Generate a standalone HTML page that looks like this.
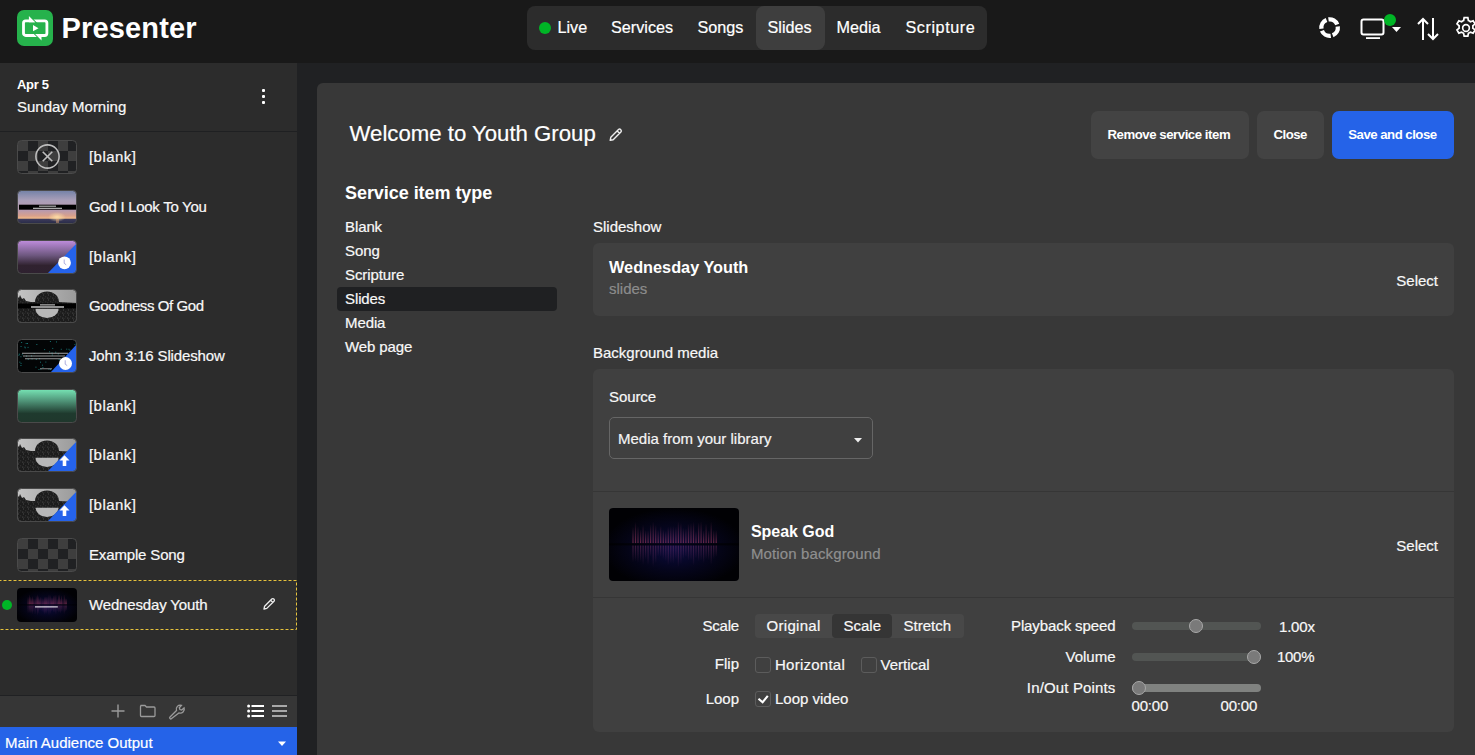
<!DOCTYPE html><html><head><meta charset="utf-8"><style>
*{margin:0;padding:0;box-sizing:border-box}
html,body{width:1475px;height:755px;overflow:hidden;background:#202123}
body{position:relative;font-family:"Liberation Sans",sans-serif}
.t{position:absolute;white-space:pre;line-height:1;-webkit-text-stroke:0.2px currentColor}
.t[style*='font-weight:700']{-webkit-text-stroke:0}
.b{position:absolute}
.thumb{position:absolute;width:60px;height:34px;border-radius:4px;overflow:hidden;border:1px solid #3a3a3a}
.big{width:130px;height:73px;border:none;border-radius:5px}
.cb{width:16px;height:16px;border:1px solid #5c5c5c;border-radius:3px}
.knob{width:14px;height:14px;border-radius:50%;background:#7a7a7a;border:1px solid #a8a8a8}
</style></head><body>
<div class="b" style="left:0px;top:0px;width:1475px;height:63px;background:#191919;border-radius:0px;"></div>
<div class="b" style="left:0px;top:63px;width:297px;height:692px;background:#2c2c2c;border-radius:0px;"></div>
<div class="b" style="left:297px;top:63px;width:1178px;height:692px;background:#202123;border-radius:0px;"></div>
<div class="b" style="left:317px;top:83px;width:1200px;height:700px;background:#383838;border-radius:6px;"></div>
<svg class="b" style="left:17px;top:10px" width="36" height="36" viewBox="0 0 36 36">
<rect x="0" y="0" width="36" height="36" rx="7" fill="#26b24c"/>
<rect x="6.5" y="10.8" width="23.4" height="14.7" rx="2.2" fill="none" stroke="#fff" stroke-width="2.8"/>
<path d="M14.6 8.2 L21.6 15.2 M21.8 28.1 L14.8 21.1" stroke="#26b24c" stroke-width="1.3"/>
<path d="M11.9 5.9 L11.9 12.2 L18.2 12.2 Z M24.5 30.4 L24.5 24.1 L18.2 24.1 Z" fill="#fff"/>
<path d="M16 15 L16 21.3 L21.5 18.15 Z" fill="#fff"/>
</svg>
<div class="t" style="left:61.5px;top:14.4px;font-size:29px;color:#ffffff;font-weight:700;letter-spacing:0.15px;">Presenter</div>
<div class="b" style="left:527px;top:6px;width:460px;height:44px;background:#2c2c2c;border-radius:8px;"></div>
<div class="b" style="left:756px;top:6px;width:69px;height:44px;background:#3e3e3e;border-radius:8px;"></div>
<div class="b" style="left:539px;top:22px;width:12px;height:12px;border-radius:50%;background:#00b526"></div>
<div class="t" style="left:557.5px;top:19.4px;font-size:16.2px;color:#ffffff;font-weight:400;letter-spacing:0px;">Live</div>
<div class="t" style="left:611.0px;top:19.4px;font-size:16.2px;color:#ffffff;font-weight:400;letter-spacing:0px;">Services</div>
<div class="t" style="left:697.5px;top:19.4px;font-size:16.2px;color:#ffffff;font-weight:400;letter-spacing:0px;">Songs</div>
<div class="t" style="left:767.5px;top:19.4px;font-size:16.2px;color:#ffffff;font-weight:400;letter-spacing:0px;">Slides</div>
<div class="t" style="left:836.5px;top:19.4px;font-size:16.2px;color:#ffffff;font-weight:400;letter-spacing:0px;">Media</div>
<div class="t" style="left:905.5px;top:19.4px;font-size:16.2px;color:#ffffff;font-weight:400;letter-spacing:0.55px;">Scripture</div>
<svg class="b" style="left:1317px;top:15px" width="25" height="25" viewBox="0 0 25 25">
<path d="M20.77 11.45 A8.25 8.25 0 0 1 15.69 20.25 M13.75 20.77 A8.25 8.25 0 0 1 4.95 15.69 M4.43 13.75 A8.25 8.25 0 0 1 9.51 4.95 M11.45 4.43 A8.25 8.25 0 0 1 20.25 9.51" fill="none" stroke="#fff" stroke-width="4.3"/>
</svg>
<svg class="b" style="left:1358px;top:10px" width="48" height="32" viewBox="0 0 48 32">
<rect x="3.5" y="9.5" width="22" height="15" rx="2" fill="none" stroke="#fff" stroke-width="2"/>
<rect x="8" y="27.2" width="14" height="1.8" fill="#fff"/>
<circle cx="32" cy="10" r="6" fill="#00b526"/>
<path d="M34 17 L43 17 L38.5 22 Z" fill="#fff"/>
</svg>
<svg class="b" style="left:1415px;top:16px" width="28" height="26" viewBox="0 0 28 26">
<path d="M8 3 V24 M3 8 L8 3 L13 8" fill="none" stroke="#fff" stroke-width="2" stroke-linejoin="miter"/>
<path d="M18 2 V23 M13 18 L18 23 L23 18" fill="none" stroke="#fff" stroke-width="2"/>
</svg>
<svg class="b" style="left:1452.7px;top:15.3px" width="26" height="26" viewBox="0 0 24 24">
<path fill="none" stroke="#fff" stroke-width="1.6" d="M10.3 2.5h3.4l.5 2.6a7.5 7.5 0 0 1 1.9 1.1l2.5-.9 1.7 2.9-2 1.7a7.5 7.5 0 0 1 0 2.2l2 1.7-1.7 2.9-2.5-.9a7.5 7.5 0 0 1-1.9 1.1l-.5 2.6h-3.4l-.5-2.6a7.5 7.5 0 0 1-1.9-1.1l-2.5.9-1.7-2.9 2-1.7a7.5 7.5 0 0 1 0-2.2l-2-1.7 1.7-2.9 2.5.9a7.5 7.5 0 0 1 1.9-1.1z"/>
<circle cx="12" cy="12" r="3.1" fill="none" stroke="#fff" stroke-width="1.5"/>
</svg>
<div class="t" style="left:17.0px;top:78.0px;font-size:13px;color:#ffffff;font-weight:700;letter-spacing:-0.3px;">Apr 5</div>
<div class="t" style="left:17.0px;top:99.3px;font-size:15px;color:#f8f8f8;font-weight:400;letter-spacing:0px;">Sunday Morning</div>
<div class="b" style="left:261.6px;top:88.6px;width:3px;height:3px;border-radius:1px;background:#fff;box-shadow:0 6px 0 #fff,0 12px 0 #fff"></div>
<div class="b" style="left:0px;top:131px;width:297px;height:1px;background:#1f2022;border-radius:0px;"></div>
<svg class="b" style="left:0px;top:579px" width="297" height="51" viewBox="0 0 297 51"><rect x="-1.5" y="1.5" width="298" height="49" fill="#303030" stroke="#e6c23c" stroke-width="1" stroke-dasharray="3 2"/></svg>
<svg class="b" style="left:17px;top:140px" width="60" height="34" viewBox="0 0 60 34"><defs><clipPath id="c0"><rect x="0.5" y="0.5" width="59" height="33" rx="4"/></clipPath></defs><g clip-path="url(#c0)"><rect width="60" height="34" fill="#202123"/><rect x="1" y="1" width="10" height="10" fill="#3e3e3e"/><rect x="21" y="1" width="10" height="10" fill="#3e3e3e"/><rect x="41" y="1" width="10" height="10" fill="#3e3e3e"/><rect x="11" y="11" width="10" height="10" fill="#3e3e3e"/><rect x="31" y="11" width="10" height="10" fill="#3e3e3e"/><rect x="51" y="11" width="10" height="10" fill="#3e3e3e"/><rect x="1" y="21" width="10" height="10" fill="#3e3e3e"/><rect x="21" y="21" width="10" height="10" fill="#3e3e3e"/><rect x="41" y="21" width="10" height="10" fill="#3e3e3e"/><rect x="11" y="31" width="10" height="10" fill="#3e3e3e"/><rect x="31" y="31" width="10" height="10" fill="#3e3e3e"/><rect x="51" y="31" width="10" height="10" fill="#3e3e3e"/><circle cx="30.5" cy="16.5" r="11.6" fill="none" stroke="#bdbdbd" stroke-width="1.6"/><path d="M25.7 11.7 L35.3 21.3 M35.3 11.7 L25.7 21.3" stroke="#bdbdbd" stroke-width="1.6"/></g><rect x="0.5" y="0.5" width="59" height="33" rx="4" fill="none" stroke="#4a4a4a" stroke-width="1"/></svg>
<div class="t" style="left:89.0px;top:149.3px;font-size:15px;color:#f8f8f8;font-weight:400;letter-spacing:0.45px;">[blank]</div>
<svg class="b" style="left:17px;top:190px" width="60" height="34" viewBox="0 0 60 34"><defs><clipPath id="c1"><rect x="0.5" y="0.5" width="59" height="33" rx="4"/></clipPath><linearGradient id="g1" x1="0" y1="0" x2="0" y2="1"><stop offset="0" stop-color="#7080a6"/><stop offset="0.3" stop-color="#a99fb8"/><stop offset="0.6" stop-color="#b89aae"/><stop offset="0.76" stop-color="#d8a08c"/><stop offset="0.83" stop-color="#f0b888"/><stop offset="0.86" stop-color="#3c3a5a"/><stop offset="1" stop-color="#262a46"/></linearGradient><radialGradient id="sun1" cx="0.5" cy="0.5" r="0.5"><stop offset="0" stop-color="#ffe0a8" stop-opacity="0.9"/><stop offset="1" stop-color="#ffe0a8" stop-opacity="0"/></radialGradient></defs><g clip-path="url(#c1)"><rect width="60" height="34" fill="url(#g1)"/><ellipse cx="40" cy="27" rx="9" ry="5" fill="url(#sun1)"/><rect x="39" y="29" width="3" height="5" fill="#e0a070" opacity="0.5"/><rect x="2" y="14.7" width="58" height="5" fill="#000"/><rect x="22" y="15.7" width="17" height="0.9" fill="#e8e8e8"/><rect x="16" y="17.8" width="29" height="0.9" fill="#f4f4f4"/></g><rect x="0.5" y="0.5" width="59" height="33" rx="4" fill="none" stroke="#4a4a4a" stroke-width="1"/></svg>
<div class="t" style="left:89.0px;top:199.3px;font-size:15px;color:#f8f8f8;font-weight:400;letter-spacing:-0.28px;">God I Look To You</div>
<svg class="b" style="left:17px;top:240px" width="60" height="34" viewBox="0 0 60 34"><defs><clipPath id="c2"><rect x="0.5" y="0.5" width="59" height="33" rx="4"/></clipPath><linearGradient id="g2" x1="0" y1="0" x2="0" y2="1"><stop offset="0" stop-color="#c28fe0"/><stop offset="0.45" stop-color="#6e5880"/><stop offset="0.75" stop-color="#30222f"/><stop offset="1" stop-color="#2e2130"/></linearGradient></defs><g clip-path="url(#c2)"><rect width="60" height="34" fill="url(#g2)"/><path d="M30 34 L60 3 L60 34 Z" fill="#2563eb"/><circle cx="47.5" cy="22.8" r="6.4" fill="#fff"/><path d="M47.2 19.5 V23.3 L49.2 24.8" stroke="#8a8ad0" stroke-width="0.7" fill="none"/></g><rect x="0.5" y="0.5" width="59" height="33" rx="4" fill="none" stroke="#4a4a4a" stroke-width="1"/></svg>
<div class="t" style="left:89.0px;top:249.3px;font-size:15px;color:#f8f8f8;font-weight:400;letter-spacing:0.45px;">[blank]</div>
<svg class="b" style="left:17px;top:289px" width="60" height="34" viewBox="0 0 60 34"><defs><clipPath id="c3"><rect x="0.5" y="0.5" width="59" height="33" rx="4"/></clipPath><linearGradient id="gg3" x1="0" y1="0" x2="1" y2="0"><stop offset="0" stop-color="#c4c4c4"/><stop offset="1" stop-color="#9a9a9a"/></linearGradient><pattern id="pn3" width="5" height="5" patternUnits="userSpaceOnUse"><rect width="5" height="5" fill="#1c1c1c"/><rect x="1" y="0.5" width="1" height="1" fill="#4a4a4a"/><rect x="3.2" y="2.3" width="1" height="1" fill="#3a3a3a"/><rect x="0.3" y="3.6" width="1" height="1" fill="#555"/><rect x="2.4" y="4" width="0.8" height="0.8" fill="#333"/></pattern></defs><g clip-path="url(#c3)"><rect width="60" height="34" fill="url(#gg3)"/><path d="M0 7 L2 9 L3 6 L5 10 L7 9 L9 12 L14 13 L18 13 A12 10.5 0 0 1 42 13 L60 14 L60 34 L0 34 Z" fill="url(#pn3)"/><path d="M18.5 19.5 A11.5 9.5 0 0 0 41.5 19.5 Z" fill="#b8b8b8"/><rect x="1" y="14.5" width="59" height="5" fill="#000"/><rect x="23" y="15.4" width="15" height="1" fill="#ddd"/><rect x="14" y="17.4" width="33" height="1.2" fill="#f0f0f0"/></g><rect x="0.5" y="0.5" width="59" height="33" rx="4" fill="none" stroke="#4a4a4a" stroke-width="1"/></svg>
<div class="t" style="left:89.0px;top:298.3px;font-size:15px;color:#f8f8f8;font-weight:400;letter-spacing:-0.42px;">Goodness Of God</div>
<svg class="b" style="left:17px;top:339px" width="60" height="34" viewBox="0 0 60 34"><defs><clipPath id="c4"><rect x="0.5" y="0.5" width="59" height="33" rx="4"/></clipPath></defs><g clip-path="url(#c4)"><rect width="60" height="34" fill="#030506"/><rect x="19.4" y="5.1" width="0.9" height="0.9" fill="#1a8a8a"/><rect x="39.1" y="2.5" width="0.9" height="0.9" fill="#1a8a8a"/><rect x="32.2" y="12.4" width="0.9" height="0.9" fill="#1a8a8a"/><rect x="3.5" y="17.3" width="0.9" height="0.9" fill="#1a8a8a"/><rect x="2.2" y="14.7" width="0.9" height="0.9" fill="#1a8a8a"/><rect x="4.2" y="3.1" width="0.9" height="0.9" fill="#1a8a8a"/><rect x="25.5" y="28.1" width="0.9" height="0.9" fill="#1a8a8a"/><rect x="7.4" y="7.6" width="0.9" height="0.9" fill="#1a8a8a"/><rect x="37.6" y="32.2" width="0.9" height="0.9" fill="#1a8a8a"/><rect x="34.6" y="13.5" width="0.9" height="0.9" fill="#1a8a8a"/><rect x="58.6" y="1.6" width="0.9" height="0.9" fill="#1a8a8a"/><rect x="51.5" y="9.8" width="0.9" height="0.9" fill="#1a8a8a"/><rect x="8.7" y="4.0" width="0.9" height="0.9" fill="#1a8a8a"/><rect x="18.5" y="27.7" width="0.9" height="0.9" fill="#1a8a8a"/><rect x="10.8" y="19.8" width="0.9" height="0.9" fill="#1a8a8a"/><rect x="38.3" y="12.7" width="0.9" height="0.9" fill="#1a8a8a"/><rect x="32.9" y="2.1" width="0.9" height="0.9" fill="#1a8a8a"/><rect x="3.6" y="7.0" width="0.9" height="0.9" fill="#1a8a8a"/><rect x="40.8" y="14.5" width="0.9" height="0.9" fill="#1a8a8a"/><rect x="18.8" y="19.9" width="0.9" height="0.9" fill="#1a8a8a"/><rect x="27.2" y="10.2" width="0.9" height="0.9" fill="#1a8a8a"/><rect x="47.7" y="23.8" width="0.9" height="0.9" fill="#1a8a8a"/><rect x="14.6" y="19.5" width="0.9" height="0.9" fill="#1a8a8a"/><rect x="31.5" y="29.8" width="0.9" height="0.9" fill="#1a8a8a"/><rect x="43.8" y="9.8" width="0.9" height="0.9" fill="#1a8a8a"/><rect x="58.8" y="4.0" width="0.9" height="0.9" fill="#1a8a8a"/><rect x="25.1" y="25.7" width="0.9" height="0.9" fill="#1a8a8a"/><rect x="9.1" y="16.6" width="0.9" height="0.9" fill="#1a8a8a"/><rect x="2.4" y="22.7" width="0.9" height="0.9" fill="#1a8a8a"/><rect x="45.9" y="19.5" width="0.9" height="0.9" fill="#1a8a8a"/><rect x="52.5" y="10.7" width="0.9" height="0.9" fill="#1a8a8a"/><rect x="41.7" y="20.2" width="0.9" height="0.9" fill="#1a8a8a"/><rect x="34.8" y="15.5" width="0.9" height="0.9" fill="#1a8a8a"/><rect x="50.4" y="32.1" width="0.9" height="0.9" fill="#1a8a8a"/><rect x="28.4" y="22.6" width="0.9" height="0.9" fill="#1a8a8a"/><rect x="3.6" y="23.9" width="0.9" height="0.9" fill="#1a8a8a"/><rect x="38.8" y="33.8" width="0.9" height="0.9" fill="#1a8a8a"/><rect x="49.3" y="9.7" width="0.9" height="0.9" fill="#1a8a8a"/><rect x="23.1" y="22.7" width="0.9" height="0.9" fill="#1a8a8a"/><rect x="1.4" y="15.7" width="0.9" height="0.9" fill="#1a8a8a"/><rect x="10.1" y="4.0" width="0.9" height="0.9" fill="#1a8a8a"/><rect x="3.5" y="26.1" width="0.9" height="0.9" fill="#1a8a8a"/><rect x="7.8" y="8.4" width="0.9" height="0.9" fill="#1a8a8a"/><rect x="23.5" y="29.6" width="0.9" height="0.9" fill="#1a8a8a"/><rect x="4.8" y="15.3" width="0.9" height="0.9" fill="#1a8a8a"/><rect x="33.0" y="30.0" width="0.9" height="0.9" fill="#1a8a8a"/><rect x="49.2" y="29.4" width="0.9" height="0.9" fill="#1a8a8a"/><rect x="16.7" y="14.1" width="0.9" height="0.9" fill="#1a8a8a"/><rect x="21.5" y="30.1" width="0.9" height="0.9" fill="#1a8a8a"/><rect x="57.5" y="5.1" width="0.9" height="0.9" fill="#1a8a8a"/><rect x="10.6" y="7.9" width="0.9" height="0.9" fill="#1a8a8a"/><rect x="14.0" y="16.5" width="0.9" height="0.9" fill="#1a8a8a"/><rect x="35.3" y="8.9" width="0.9" height="0.9" fill="#1a8a8a"/><rect x="0.2" y="14.2" width="0.9" height="0.9" fill="#1a8a8a"/><rect x="22.2" y="19.3" width="0.9" height="0.9" fill="#1a8a8a"/><rect x="5" y="13.8" width="46" height="0.8" fill="#ccc"/><rect x="6" y="16.6" width="42" height="0.8" fill="#bbb"/><rect x="8" y="19.4" width="36" height="0.8" fill="#bbb"/><rect x="23" y="29.4" width="12" height="0.8" fill="#aaa"/><path d="M33 34 L60 5 L60 34 Z" fill="#2563eb"/><circle cx="48.5" cy="24.5" r="6.5" fill="#fff"/><path d="M48.2 21.3 V25.2 L50.2 26.6" stroke="#8a8ad0" stroke-width="0.7" fill="none"/></g><rect x="0.5" y="0.5" width="59" height="33" rx="4" fill="none" stroke="#4a4a4a" stroke-width="1"/></svg>
<div class="t" style="left:89.0px;top:348.3px;font-size:15px;color:#f8f8f8;font-weight:400;letter-spacing:-0.15px;">John 3:16 Slideshow</div>
<svg class="b" style="left:17px;top:389px" width="60" height="34" viewBox="0 0 60 34"><defs><clipPath id="c5"><rect x="0.5" y="0.5" width="59" height="33" rx="4"/></clipPath><linearGradient id="g5" x1="0" y1="0" x2="0" y2="1"><stop offset="0" stop-color="#78e6b6"/><stop offset="0.35" stop-color="#4f9478"/><stop offset="0.72" stop-color="#1f3a2e"/><stop offset="1" stop-color="#1f372c"/></linearGradient></defs><g clip-path="url(#c5)"><rect width="60" height="34" fill="url(#g5)"/></g><rect x="0.5" y="0.5" width="59" height="33" rx="4" fill="none" stroke="#4a4a4a" stroke-width="1"/></svg>
<div class="t" style="left:89.0px;top:398.3px;font-size:15px;color:#f8f8f8;font-weight:400;letter-spacing:0.45px;">[blank]</div>
<svg class="b" style="left:17px;top:438px" width="60" height="34" viewBox="0 0 60 34"><defs><clipPath id="c6"><rect x="0.5" y="0.5" width="59" height="33" rx="4"/></clipPath><linearGradient id="gg6" x1="0" y1="0" x2="1" y2="0"><stop offset="0" stop-color="#c4c4c4"/><stop offset="1" stop-color="#9a9a9a"/></linearGradient><pattern id="pn6" width="5" height="5" patternUnits="userSpaceOnUse"><rect width="5" height="5" fill="#1c1c1c"/><rect x="1" y="0.5" width="1" height="1" fill="#4a4a4a"/><rect x="3.2" y="2.3" width="1" height="1" fill="#3a3a3a"/><rect x="0.3" y="3.6" width="1" height="1" fill="#555"/><rect x="2.4" y="4" width="0.8" height="0.8" fill="#333"/></pattern></defs><g clip-path="url(#c6)"><rect width="60" height="34" fill="url(#gg6)"/><path d="M0 7 L2 9 L3 6 L5 10 L7 9 L9 12 L14 13 L18 13 A12 10.5 0 0 1 42 13 L60 14 L60 34 L0 34 Z" fill="url(#pn6)"/><path d="M18.5 19.5 A11.5 9.5 0 0 0 41.5 19.5 Z" fill="#b8b8b8"/><rect x="18" y="13" width="24" height="6.5" fill="url(#pn6)"/><path d="M30 34 L60 3 L60 34 Z" fill="#2563eb"/><path d="M47.5 17.2 L52.5 22.5 L49.3 22.5 L49.3 28 L45.7 28 L45.7 22.5 L42.5 22.5 Z" fill="#fff"/></g><rect x="0.5" y="0.5" width="59" height="33" rx="4" fill="none" stroke="#4a4a4a" stroke-width="1"/></svg>
<div class="t" style="left:89.0px;top:447.3px;font-size:15px;color:#f8f8f8;font-weight:400;letter-spacing:0.45px;">[blank]</div>
<svg class="b" style="left:17px;top:488px" width="60" height="34" viewBox="0 0 60 34"><defs><clipPath id="c7"><rect x="0.5" y="0.5" width="59" height="33" rx="4"/></clipPath><linearGradient id="gg7" x1="0" y1="0" x2="1" y2="0"><stop offset="0" stop-color="#c4c4c4"/><stop offset="1" stop-color="#9a9a9a"/></linearGradient><pattern id="pn7" width="5" height="5" patternUnits="userSpaceOnUse"><rect width="5" height="5" fill="#1c1c1c"/><rect x="1" y="0.5" width="1" height="1" fill="#4a4a4a"/><rect x="3.2" y="2.3" width="1" height="1" fill="#3a3a3a"/><rect x="0.3" y="3.6" width="1" height="1" fill="#555"/><rect x="2.4" y="4" width="0.8" height="0.8" fill="#333"/></pattern></defs><g clip-path="url(#c7)"><rect width="60" height="34" fill="url(#gg7)"/><path d="M0 7 L2 9 L3 6 L5 10 L7 9 L9 12 L14 13 L18 13 A12 10.5 0 0 1 42 13 L60 14 L60 34 L0 34 Z" fill="url(#pn7)"/><path d="M18.5 19.5 A11.5 9.5 0 0 0 41.5 19.5 Z" fill="#b8b8b8"/><rect x="18" y="13" width="24" height="6.5" fill="url(#pn7)"/><path d="M30 34 L60 3 L60 34 Z" fill="#2563eb"/><path d="M47.5 17.2 L52.5 22.5 L49.3 22.5 L49.3 28 L45.7 28 L45.7 22.5 L42.5 22.5 Z" fill="#fff"/></g><rect x="0.5" y="0.5" width="59" height="33" rx="4" fill="none" stroke="#4a4a4a" stroke-width="1"/></svg>
<div class="t" style="left:89.0px;top:497.3px;font-size:15px;color:#f8f8f8;font-weight:400;letter-spacing:0.45px;">[blank]</div>
<svg class="b" style="left:17px;top:538px" width="60" height="34" viewBox="0 0 60 34"><defs><clipPath id="c8"><rect x="0.5" y="0.5" width="59" height="33" rx="4"/></clipPath></defs><g clip-path="url(#c8)"><rect width="60" height="34" fill="#202123"/><rect x="1" y="1" width="10" height="10" fill="#3e3e3e"/><rect x="21" y="1" width="10" height="10" fill="#3e3e3e"/><rect x="41" y="1" width="10" height="10" fill="#3e3e3e"/><rect x="11" y="11" width="10" height="10" fill="#3e3e3e"/><rect x="31" y="11" width="10" height="10" fill="#3e3e3e"/><rect x="51" y="11" width="10" height="10" fill="#3e3e3e"/><rect x="1" y="21" width="10" height="10" fill="#3e3e3e"/><rect x="21" y="21" width="10" height="10" fill="#3e3e3e"/><rect x="41" y="21" width="10" height="10" fill="#3e3e3e"/><rect x="11" y="31" width="10" height="10" fill="#3e3e3e"/><rect x="31" y="31" width="10" height="10" fill="#3e3e3e"/><rect x="51" y="31" width="10" height="10" fill="#3e3e3e"/></g><rect x="0.5" y="0.5" width="59" height="33" rx="4" fill="none" stroke="#4a4a4a" stroke-width="1"/></svg>
<div class="t" style="left:89.0px;top:547.3px;font-size:15px;color:#f8f8f8;font-weight:400;letter-spacing:-0.15px;">Example Song</div>
<svg class="b" style="left:17px;top:588px" width="60" height="34" viewBox="0 0 60 34"><defs><clipPath id="cpt9"><rect width="60" height="34" rx="4"/></clipPath><radialGradient id="rgt9" cx="0.5" cy="0.55" r="0.55"><stop offset="0" stop-color="#0c0c40"/><stop offset="0.55" stop-color="#05051c"/><stop offset="1" stop-color="#010104"/></radialGradient><linearGradient id="upt9" x1="0" y1="1" x2="0" y2="0"><stop offset="0" stop-color="#c84870" stop-opacity="0.85"/><stop offset="1" stop-color="#d0507a" stop-opacity="0"/></linearGradient><linearGradient id="dnt9" x1="0" y1="0" x2="0" y2="1"><stop offset="0" stop-color="#a04078" stop-opacity="0.6375"/><stop offset="1" stop-color="#b04880" stop-opacity="0"/></linearGradient></defs><g clip-path="url(#cpt9)"><rect width="60" height="34" fill="url(#rgt9)"/><rect x="10.8" y="8.7" width="0.5" height="7.7" fill="url(#upt9)"/><rect x="10.8" y="17.4" width="0.5" height="8.0" fill="url(#dnt9)"/><rect x="12.0" y="6.5" width="0.5" height="9.9" fill="url(#upt9)"/><rect x="12.0" y="17.4" width="0.5" height="7.5" fill="url(#dnt9)"/><rect x="13.1" y="8.4" width="0.5" height="7.9" fill="url(#upt9)"/><rect x="13.1" y="17.4" width="0.5" height="8.1" fill="url(#dnt9)"/><rect x="14.3" y="9.9" width="0.5" height="6.5" fill="url(#upt9)"/><rect x="14.3" y="17.4" width="0.5" height="7.7" fill="url(#dnt9)"/><rect x="15.5" y="7.9" width="0.5" height="8.5" fill="url(#upt9)"/><rect x="15.5" y="17.4" width="0.5" height="9.1" fill="url(#dnt9)"/><rect x="16.6" y="10.3" width="0.5" height="6.0" fill="url(#upt9)"/><rect x="16.6" y="17.4" width="0.5" height="6.6" fill="url(#dnt9)"/><rect x="17.8" y="10.4" width="0.5" height="6.0" fill="url(#upt9)"/><rect x="17.8" y="17.4" width="0.5" height="9.2" fill="url(#dnt9)"/><rect x="18.9" y="7.6" width="0.5" height="8.8" fill="url(#upt9)"/><rect x="18.9" y="17.4" width="0.5" height="5.3" fill="url(#dnt9)"/><rect x="20.1" y="6.3" width="0.5" height="10.1" fill="url(#upt9)"/><rect x="20.1" y="17.4" width="0.5" height="10.0" fill="url(#dnt9)"/><rect x="21.3" y="7.8" width="0.5" height="8.6" fill="url(#upt9)"/><rect x="21.3" y="17.4" width="0.5" height="8.2" fill="url(#dnt9)"/><rect x="22.4" y="10.1" width="0.5" height="6.3" fill="url(#upt9)"/><rect x="22.4" y="17.4" width="0.5" height="5.2" fill="url(#dnt9)"/><rect x="23.6" y="8.4" width="0.5" height="8.0" fill="url(#upt9)"/><rect x="23.6" y="17.4" width="0.5" height="5.4" fill="url(#dnt9)"/><rect x="24.8" y="9.9" width="0.5" height="6.5" fill="url(#upt9)"/><rect x="24.8" y="17.4" width="0.5" height="6.3" fill="url(#dnt9)"/><rect x="25.9" y="10.6" width="0.5" height="5.7" fill="url(#upt9)"/><rect x="25.9" y="17.4" width="0.5" height="7.5" fill="url(#dnt9)"/><rect x="27.1" y="8.8" width="0.5" height="7.6" fill="url(#upt9)"/><rect x="27.1" y="17.4" width="0.5" height="9.4" fill="url(#dnt9)"/><rect x="28.3" y="8.4" width="0.5" height="8.0" fill="url(#upt9)"/><rect x="28.3" y="17.4" width="0.5" height="8.4" fill="url(#dnt9)"/><rect x="29.4" y="8.5" width="0.5" height="7.9" fill="url(#upt9)"/><rect x="29.4" y="17.4" width="0.5" height="8.5" fill="url(#dnt9)"/><rect x="30.6" y="8.7" width="0.5" height="7.7" fill="url(#upt9)"/><rect x="30.6" y="17.4" width="0.5" height="6.5" fill="url(#dnt9)"/><rect x="31.7" y="6.2" width="0.5" height="10.2" fill="url(#upt9)"/><rect x="31.7" y="17.4" width="0.5" height="10.2" fill="url(#dnt9)"/><rect x="32.9" y="6.9" width="0.5" height="9.5" fill="url(#upt9)"/><rect x="32.9" y="17.4" width="0.5" height="8.7" fill="url(#dnt9)"/><rect x="34.1" y="9.3" width="0.5" height="7.1" fill="url(#upt9)"/><rect x="34.1" y="17.4" width="0.5" height="6.3" fill="url(#dnt9)"/><rect x="35.2" y="9.5" width="0.5" height="6.9" fill="url(#upt9)"/><rect x="35.2" y="17.4" width="0.5" height="5.5" fill="url(#dnt9)"/><rect x="36.4" y="7.3" width="0.5" height="9.1" fill="url(#upt9)"/><rect x="36.4" y="17.4" width="0.5" height="7.1" fill="url(#dnt9)"/><rect x="37.6" y="6.9" width="0.5" height="9.5" fill="url(#upt9)"/><rect x="37.6" y="17.4" width="0.5" height="7.1" fill="url(#dnt9)"/><rect x="38.7" y="6.4" width="0.5" height="10.0" fill="url(#upt9)"/><rect x="38.7" y="17.4" width="0.5" height="9.4" fill="url(#dnt9)"/><rect x="39.9" y="10.8" width="0.5" height="5.6" fill="url(#upt9)"/><rect x="39.9" y="17.4" width="0.5" height="6.2" fill="url(#dnt9)"/><rect x="41.1" y="6.6" width="0.5" height="9.8" fill="url(#upt9)"/><rect x="41.1" y="17.4" width="0.5" height="7.5" fill="url(#dnt9)"/><rect x="42.2" y="6.3" width="0.5" height="10.1" fill="url(#upt9)"/><rect x="42.2" y="17.4" width="0.5" height="7.1" fill="url(#dnt9)"/><rect x="43.4" y="10.4" width="0.5" height="5.9" fill="url(#upt9)"/><rect x="43.4" y="17.4" width="0.5" height="8.3" fill="url(#dnt9)"/><rect x="44.5" y="7.2" width="0.5" height="9.2" fill="url(#upt9)"/><rect x="44.5" y="17.4" width="0.5" height="6.5" fill="url(#dnt9)"/><rect x="45.7" y="10.4" width="0.5" height="6.0" fill="url(#upt9)"/><rect x="45.7" y="17.4" width="0.5" height="6.8" fill="url(#dnt9)"/><rect x="46.9" y="6.4" width="0.5" height="10.0" fill="url(#upt9)"/><rect x="46.9" y="17.4" width="0.5" height="9.0" fill="url(#dnt9)"/><rect x="48.0" y="10.2" width="0.5" height="6.2" fill="url(#upt9)"/><rect x="48.0" y="17.4" width="0.5" height="6.4" fill="url(#dnt9)"/><rect x="49.2" y="10.3" width="0.5" height="6.1" fill="url(#upt9)"/><rect x="49.2" y="17.4" width="0.5" height="5.4" fill="url(#dnt9)"/><rect x="0" y="16.4" width="60" height="1.0" fill="#000" opacity="0.6"/><rect x="18.0" y="18.4" width="22.8" height="1" fill="#fff"/></g></svg>
<div class="t" style="left:89.0px;top:597.3px;font-size:15px;color:#f8f8f8;font-weight:400;letter-spacing:-0.15px;">Wednesday Youth</div>
<div class="b" style="left:2px;top:600px;width:10px;height:10px;border-radius:50%;background:#00b526"></div>
<svg class="b" style="left:261px;top:596px" width="16" height="16" viewBox="0 0 16 16">
<path d="M3 13 L3.6 10.2 L10.8 3 a1.4 1.4 0 0 1 2 0 l0.2 0.2 a1.4 1.4 0 0 1 0 2 L5.8 12.4 Z M9.6 4.2 L11.8 6.4" fill="none" stroke="#eee" stroke-width="1.3" stroke-linejoin="round"/>
</svg>
<div class="b" style="left:0px;top:695px;width:297px;height:32px;background:#363636;border-radius:0px;"></div>
<div class="b" style="left:0px;top:695px;width:297px;height:1px;background:#202123;border-radius:0px;"></div>
<svg class="b" style="left:108px;top:700px" width="190" height="22" viewBox="0 0 190 22">
<path d="M10 4.5 V17.5 M3.5 11 H16.5" stroke="#9a9a9a" stroke-width="1.4" fill="none"/>
<path d="M32.5 5.5 h4.5 l1.5 1.5 h7.5 a1 1 0 0 1 1 1 v7.5 a1 1 0 0 1 -1 1 h-12.5 a1 1 0 0 1 -1 -1 v-9 a1 1 0 0 1 1 -1z" stroke="#9a9a9a" stroke-width="1.3" fill="none"/>
<path d="M62 17 L68.5 10.5 a4 4 0 0 1 5 -5.2 l-2.2 2.4 l0.6 1.8 l1.8 0.6 l2.4 -2.2 a4 4 0 0 1 -5.2 5 L63.6 18.6 a1.1 1.1 0 0 1 -1.6 -1.6z" stroke="#9a9a9a" stroke-width="1.3" fill="none"/>
<circle cx="140.6" cy="6" r="1.5" fill="#fff"/><circle cx="140.6" cy="11" r="1.5" fill="#fff"/><circle cx="140.6" cy="16" r="1.5" fill="#fff"/>
<rect x="143.5" y="5" width="12.5" height="2" fill="#fff"/><rect x="143.5" y="10" width="12.5" height="2" fill="#fff"/><rect x="143.5" y="15" width="12.5" height="2" fill="#fff"/>
<rect x="164" y="5" width="15" height="2" fill="#a8a8a8"/><rect x="164" y="10" width="15" height="2" fill="#a8a8a8"/><rect x="164" y="15" width="15" height="2" fill="#a8a8a8"/>
</svg>
<div class="b" style="left:0px;top:727px;width:297px;height:28px;background:#2563e8;border-radius:0px;"></div>
<div class="t" style="left:5.0px;top:735.3px;font-size:15px;color:#ffffff;font-weight:400;letter-spacing:0px;">Main Audience Output</div>
<svg class="b" style="left:277px;top:741px" width="10" height="6" viewBox="0 0 10 6"><path d="M1 0.5 H9 L5 5 Z" fill="#fff"/></svg>
<div class="t" style="left:349.5px;top:123.1px;font-size:22.2px;color:#ffffff;font-weight:400;letter-spacing:0px;">Welcome to Youth Group</div>
<svg class="b" style="left:607px;top:126px" width="18" height="17" viewBox="0 0 18 17">
<path d="M3.2 14.3 L3.8 11.3 L11.5 3.6 a1.5 1.5 0 0 1 2.1 0 l0.3 0.3 a1.5 1.5 0 0 1 0 2.1 L6.2 13.7 Z M10.2 4.9 L12.6 7.3" fill="none" stroke="#eee" stroke-width="1.4" stroke-linejoin="round"/>
</svg>
<div class="b" style="left:1091px;top:111px;width:158px;height:48px;background:#434343;border-radius:7px;"></div>
<div class="b" style="left:1257px;top:111px;width:67px;height:48px;background:#434343;border-radius:7px;"></div>
<div class="b" style="left:1332px;top:111px;width:122px;height:48px;background:#2563e8;border-radius:7px;"></div>
<div class="t" style="left:1107.5px;top:128.0px;font-size:13.2px;color:#ffffff;font-weight:700;letter-spacing:-0.45px;">Remove service item</div>
<div class="t" style="left:1273.5px;top:128.0px;font-size:13.2px;color:#ffffff;font-weight:700;letter-spacing:-0.5px;">Close</div>
<div class="t" style="left:1348.3px;top:128.0px;font-size:13.2px;color:#ffffff;font-weight:700;letter-spacing:-0.5px;">Save and close</div>
<div class="t" style="left:345.0px;top:183.8px;font-size:18px;color:#ffffff;font-weight:700;letter-spacing:-0.05px;">Service item type</div>
<div class="b" style="left:337px;top:287px;width:220px;height:24px;background:#1f2022;border-radius:4px;"></div>
<div class="t" style="left:345.0px;top:219.1px;font-size:15px;color:#f8f8f8;font-weight:400;letter-spacing:-0.1px;">Blank</div>
<div class="t" style="left:345.0px;top:243.1px;font-size:15px;color:#f8f8f8;font-weight:400;letter-spacing:-0.1px;">Song</div>
<div class="t" style="left:345.0px;top:267.1px;font-size:15px;color:#f8f8f8;font-weight:400;letter-spacing:-0.1px;">Scripture</div>
<div class="t" style="left:345.0px;top:291.1px;font-size:15px;color:#f8f8f8;font-weight:400;letter-spacing:-0.1px;">Slides</div>
<div class="t" style="left:345.0px;top:315.1px;font-size:15px;color:#f8f8f8;font-weight:400;letter-spacing:-0.1px;">Media</div>
<div class="t" style="left:345.0px;top:339.1px;font-size:15px;color:#f8f8f8;font-weight:400;letter-spacing:-0.1px;">Web page</div>
<div class="t" style="left:593.0px;top:219.1px;font-size:15px;color:#f8f8f8;font-weight:400;letter-spacing:0px;">Slideshow</div>
<div class="b" style="left:593px;top:243px;width:861px;height:73px;background:#404040;border-radius:6px;"></div>
<div class="t" style="left:609.0px;top:259.0px;font-size:16.3px;color:#ffffff;font-weight:700;letter-spacing:0px;">Wednesday Youth</div>
<div class="t" style="left:609.0px;top:280.8px;font-size:15px;color:#8c8c8c;font-weight:400;letter-spacing:0px;">slides</div>
<div class="t" style="right:37.0px;top:272.8px;font-size:15px;color:#f8f8f8;font-weight:400;letter-spacing:0px;">Select</div>
<div class="t" style="left:593.0px;top:345.3px;font-size:15px;color:#f8f8f8;font-weight:400;letter-spacing:0px;">Background media</div>
<div class="b" style="left:593px;top:369px;width:861px;height:363px;background:#404040;border-radius:6px;"></div>
<div class="t" style="left:609.0px;top:389.2px;font-size:15px;color:#f8f8f8;font-weight:400;letter-spacing:-0.1px;">Source</div>
<div class="b" style="left:609px;top:417px;width:264px;height:42px;border:1px solid #666;border-radius:5px;background:#404040"></div>
<div class="t" style="left:618.0px;top:430.5px;font-size:15px;color:#f4f4f4;font-weight:400;letter-spacing:0px;">Media from your library</div>
<svg class="b" style="left:852.5px;top:436.5px" width="10" height="6" viewBox="0 0 10 6"><path d="M1 1 H9 L5 5.5 Z" fill="#eee"/></svg>
<div class="b" style="left:593px;top:491px;width:861px;height:1px;background:#363636;border-radius:0px;"></div>
<svg class="b" style="left:609px;top:508px" width="130" height="73" viewBox="0 0 130 73"><defs><clipPath id="cpbig"><rect width="130" height="73" rx="4"/></clipPath><radialGradient id="rgbig" cx="0.5" cy="0.55" r="0.55"><stop offset="0" stop-color="#0c0c40"/><stop offset="0.55" stop-color="#05051c"/><stop offset="1" stop-color="#010104"/></radialGradient><linearGradient id="upbig" x1="0" y1="1" x2="0" y2="0"><stop offset="0" stop-color="#c84870" stop-opacity="0.5"/><stop offset="1" stop-color="#d0507a" stop-opacity="0"/></linearGradient><linearGradient id="dnbig" x1="0" y1="0" x2="0" y2="1"><stop offset="0" stop-color="#a04078" stop-opacity="0.375"/><stop offset="1" stop-color="#b04880" stop-opacity="0"/></linearGradient></defs><g clip-path="url(#cpbig)"><rect width="130" height="73" fill="url(#rgbig)"/><rect x="23.4" y="18.7" width="1.2" height="16.5" fill="url(#upbig)"/><rect x="23.4" y="37.4" width="1.2" height="17.1" fill="url(#dnbig)"/><rect x="25.9" y="14.0" width="1.2" height="21.2" fill="url(#upbig)"/><rect x="25.9" y="37.4" width="1.2" height="16.0" fill="url(#dnbig)"/><rect x="28.4" y="18.1" width="1.2" height="17.0" fill="url(#upbig)"/><rect x="28.4" y="37.4" width="1.2" height="17.4" fill="url(#dnbig)"/><rect x="31.0" y="21.3" width="1.2" height="13.9" fill="url(#upbig)"/><rect x="31.0" y="37.4" width="1.2" height="16.6" fill="url(#dnbig)"/><rect x="33.5" y="16.9" width="1.2" height="18.3" fill="url(#upbig)"/><rect x="33.5" y="37.4" width="1.2" height="19.6" fill="url(#dnbig)"/><rect x="36.0" y="22.2" width="1.2" height="13.0" fill="url(#upbig)"/><rect x="36.0" y="37.4" width="1.2" height="14.3" fill="url(#dnbig)"/><rect x="38.5" y="22.2" width="1.2" height="12.9" fill="url(#upbig)"/><rect x="38.5" y="37.4" width="1.2" height="19.8" fill="url(#dnbig)"/><rect x="41.0" y="16.3" width="1.2" height="18.9" fill="url(#upbig)"/><rect x="41.0" y="37.4" width="1.2" height="11.4" fill="url(#dnbig)"/><rect x="43.6" y="13.5" width="1.2" height="21.7" fill="url(#upbig)"/><rect x="43.6" y="37.4" width="1.2" height="21.5" fill="url(#dnbig)"/><rect x="46.1" y="16.7" width="1.2" height="18.5" fill="url(#upbig)"/><rect x="46.1" y="37.4" width="1.2" height="17.7" fill="url(#dnbig)"/><rect x="48.6" y="21.6" width="1.2" height="13.6" fill="url(#upbig)"/><rect x="48.6" y="37.4" width="1.2" height="11.1" fill="url(#dnbig)"/><rect x="51.1" y="17.9" width="1.2" height="17.3" fill="url(#upbig)"/><rect x="51.1" y="37.4" width="1.2" height="11.6" fill="url(#dnbig)"/><rect x="53.7" y="21.3" width="1.2" height="13.9" fill="url(#upbig)"/><rect x="53.7" y="37.4" width="1.2" height="13.6" fill="url(#dnbig)"/><rect x="56.2" y="22.8" width="1.2" height="12.3" fill="url(#upbig)"/><rect x="56.2" y="37.4" width="1.2" height="16.0" fill="url(#dnbig)"/><rect x="58.7" y="18.8" width="1.2" height="16.4" fill="url(#upbig)"/><rect x="58.7" y="37.4" width="1.2" height="20.2" fill="url(#dnbig)"/><rect x="61.2" y="18.0" width="1.2" height="17.2" fill="url(#upbig)"/><rect x="61.2" y="37.4" width="1.2" height="18.0" fill="url(#dnbig)"/><rect x="63.7" y="18.2" width="1.2" height="17.0" fill="url(#upbig)"/><rect x="63.7" y="37.4" width="1.2" height="18.2" fill="url(#dnbig)"/><rect x="66.3" y="18.6" width="1.2" height="16.6" fill="url(#upbig)"/><rect x="66.3" y="37.4" width="1.2" height="14.0" fill="url(#dnbig)"/><rect x="68.8" y="13.3" width="1.2" height="21.9" fill="url(#upbig)"/><rect x="68.8" y="37.4" width="1.2" height="21.9" fill="url(#dnbig)"/><rect x="71.3" y="14.9" width="1.2" height="20.3" fill="url(#upbig)"/><rect x="71.3" y="37.4" width="1.2" height="18.7" fill="url(#dnbig)"/><rect x="73.8" y="20.0" width="1.2" height="15.2" fill="url(#upbig)"/><rect x="73.8" y="37.4" width="1.2" height="13.5" fill="url(#dnbig)"/><rect x="76.3" y="20.3" width="1.2" height="14.9" fill="url(#upbig)"/><rect x="76.3" y="37.4" width="1.2" height="11.7" fill="url(#dnbig)"/><rect x="78.9" y="15.6" width="1.2" height="19.6" fill="url(#upbig)"/><rect x="78.9" y="37.4" width="1.2" height="15.3" fill="url(#dnbig)"/><rect x="81.4" y="14.8" width="1.2" height="20.4" fill="url(#upbig)"/><rect x="81.4" y="37.4" width="1.2" height="15.2" fill="url(#dnbig)"/><rect x="83.9" y="13.7" width="1.2" height="21.5" fill="url(#upbig)"/><rect x="83.9" y="37.4" width="1.2" height="20.2" fill="url(#dnbig)"/><rect x="86.4" y="23.1" width="1.2" height="12.1" fill="url(#upbig)"/><rect x="86.4" y="37.4" width="1.2" height="13.2" fill="url(#dnbig)"/><rect x="89.0" y="14.2" width="1.2" height="21.0" fill="url(#upbig)"/><rect x="89.0" y="37.4" width="1.2" height="16.1" fill="url(#dnbig)"/><rect x="91.5" y="13.5" width="1.2" height="21.7" fill="url(#upbig)"/><rect x="91.5" y="37.4" width="1.2" height="15.3" fill="url(#dnbig)"/><rect x="94.0" y="22.4" width="1.2" height="12.8" fill="url(#upbig)"/><rect x="94.0" y="37.4" width="1.2" height="17.8" fill="url(#dnbig)"/><rect x="96.5" y="15.5" width="1.2" height="19.7" fill="url(#upbig)"/><rect x="96.5" y="37.4" width="1.2" height="13.9" fill="url(#dnbig)"/><rect x="99.0" y="22.3" width="1.2" height="12.9" fill="url(#upbig)"/><rect x="99.0" y="37.4" width="1.2" height="14.6" fill="url(#dnbig)"/><rect x="101.6" y="13.6" width="1.2" height="21.5" fill="url(#upbig)"/><rect x="101.6" y="37.4" width="1.2" height="19.3" fill="url(#dnbig)"/><rect x="104.1" y="22.0" width="1.2" height="13.2" fill="url(#upbig)"/><rect x="104.1" y="37.4" width="1.2" height="13.6" fill="url(#dnbig)"/><rect x="106.6" y="22.1" width="1.2" height="13.0" fill="url(#upbig)"/><rect x="106.6" y="37.4" width="1.2" height="11.6" fill="url(#dnbig)"/><rect x="0" y="35.2" width="130" height="2.2" fill="#000" opacity="0.6"/></g></svg>
<div class="t" style="left:751.0px;top:524.0px;font-size:16px;color:#ffffff;font-weight:700;letter-spacing:-0.05px;">Speak God</div>
<div class="t" style="left:751.0px;top:545.9px;font-size:15px;color:#8f8f8f;font-weight:400;letter-spacing:0.12px;">Motion background</div>
<div class="t" style="right:37.0px;top:537.5px;font-size:15px;color:#f8f8f8;font-weight:400;letter-spacing:0px;">Select</div>
<div class="b" style="left:593px;top:597px;width:861px;height:1px;background:#363636;border-radius:0px;"></div>
<div class="t" style="right:736.0px;top:618.1px;font-size:15px;color:#f8f8f8;font-weight:400;letter-spacing:-0.2px;">Scale</div>
<div class="b" style="left:755px;top:614px;width:209px;height:24px;background:#484848;border-radius:4px;"></div>
<div class="b" style="left:832px;top:614px;width:60px;height:24px;background:#353535;border-radius:4px;"></div>
<div class="t" style="left:766.5px;top:618.1px;font-size:15px;color:#f8f8f8;font-weight:400;letter-spacing:0.3px;">Original</div>
<div class="t" style="left:843.5px;top:618.1px;font-size:15px;color:#f8f8f8;font-weight:400;letter-spacing:0px;">Scale</div>
<div class="t" style="left:903.5px;top:618.1px;font-size:15px;color:#f8f8f8;font-weight:400;letter-spacing:0px;">Stretch</div>
<div class="t" style="right:736.0px;top:655.8px;font-size:15px;color:#f8f8f8;font-weight:400;letter-spacing:0px;">Flip</div>
<div class="b cb" style="left:755px;top:657px"></div>
<div class="t" style="left:775.0px;top:657.2px;font-size:15px;color:#f8f8f8;font-weight:400;letter-spacing:0.25px;">Horizontal</div>
<div class="b cb" style="left:861px;top:657px"></div>
<div class="t" style="left:880.5px;top:657.2px;font-size:15px;color:#f8f8f8;font-weight:400;letter-spacing:0px;">Vertical</div>
<div class="t" style="right:736.0px;top:691.3px;font-size:15px;color:#f8f8f8;font-weight:400;letter-spacing:0px;">Loop</div>
<div class="b cb" style="left:755px;top:691px"></div>
<svg class="b" style="left:755px;top:691px" width="16" height="16" viewBox="0 0 16 16"><path d="M3.5 7.8 L7.6 11.3 L12.8 4.8" fill="none" stroke="#fff" stroke-width="2.1"/></svg>
<div class="t" style="left:775.0px;top:691.3px;font-size:15px;color:#f8f8f8;font-weight:400;letter-spacing:0px;">Loop video</div>
<div class="t" style="right:359.5px;top:618.0px;font-size:15px;color:#f8f8f8;font-weight:400;letter-spacing:-0.1px;">Playback speed</div>
<div class="b" style="left:1132px;top:622px;width:129px;height:8px;background:#525553;border-radius:4px;"></div>
<div class="b knob" style="left:1189px;top:619px"></div>
<div class="t" style="left:1279.0px;top:618.5px;font-size:15px;color:#f8f8f8;font-weight:400;letter-spacing:-0.2px;">1.00x</div>
<div class="t" style="right:359.5px;top:649.3px;font-size:15px;color:#f8f8f8;font-weight:400;letter-spacing:0px;">Volume</div>
<div class="b" style="left:1132px;top:653px;width:129px;height:8px;background:#525553;border-radius:4px;"></div>
<div class="b knob" style="left:1247px;top:650px"></div>
<div class="t" style="left:1277.0px;top:649.3px;font-size:15px;color:#f8f8f8;font-weight:400;letter-spacing:-0.3px;">100%</div>
<div class="t" style="right:359.5px;top:680.0px;font-size:15px;color:#f8f8f8;font-weight:400;letter-spacing:0.15px;">In/Out Points</div>
<div class="b" style="left:1132px;top:684px;width:129px;height:8px;background:#808280;border-radius:4px;"></div>
<div class="b knob" style="left:1132px;top:681px"></div>
<div class="t" style="left:1131.5px;top:697.9px;font-size:15px;color:#f8f8f8;font-weight:400;letter-spacing:-0.2px;">00:00</div>
<div class="t" style="left:1220.5px;top:697.9px;font-size:15px;color:#f8f8f8;font-weight:400;letter-spacing:-0.2px;">00:00</div>
</body></html>
